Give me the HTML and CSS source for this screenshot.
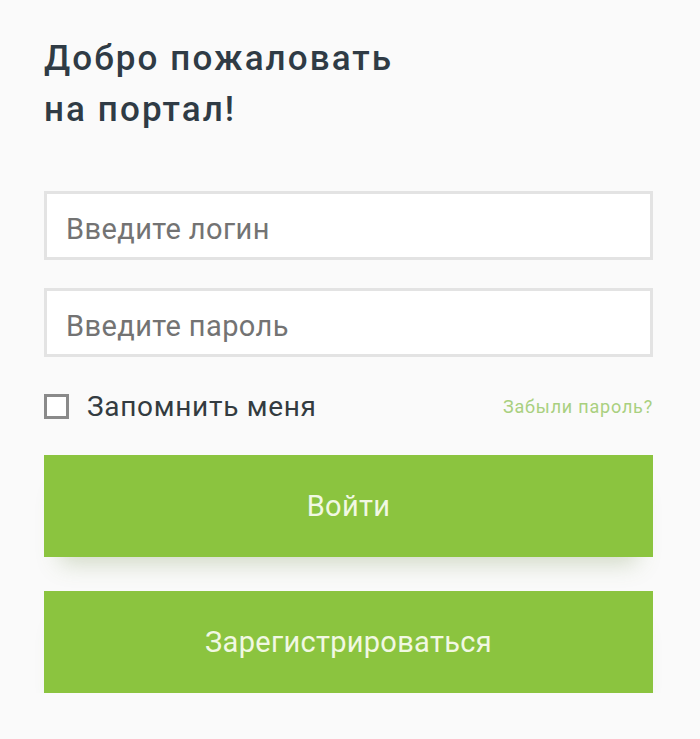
FILE: index.html
```html
<!DOCTYPE html>
<html lang="ru">
<head>
<meta charset="utf-8">
<link rel="stylesheet" href="styles.css">
</head>
<body>
<main class="login">
  <h1 class="title">Добро пожаловать<br>на портал!</h1>
  <form class="form">
    <div class="field"><input class="input" type="text" placeholder="Введите логин"></div>
    <div class="field"><input class="input" type="password" placeholder="Введите пароль"></div>
    <div class="row">
      <label class="remember"><span class="box"></span><span class="remember-text">Запомнить меня</span></label>
      <a class="forgot" href="#">Забыли пароль?</a>
    </div>
    <button type="button" class="btn btn-login">Войти</button>
    <button type="button" class="btn btn-register">Зарегистрироваться</button>
  </form>
</main>
</body>
</html>
```

FILE: styles.css
```css
html, body {
  margin: 0;
  padding: 0;
  background: #fafafa;
}
body {
  font-family: Roboto, "Noto Sans", sans-serif;
}
.login {
  width: 609px;
  padding: 33px 0 0 44px;
}
.title {
  margin: 0;
  font-size: 35px;
  line-height: 51px;
  font-weight: 500;
  letter-spacing: 2.1px;
  color: #2f3b45;
}
.form {
  margin-top: 56px;
  display: flex;
  flex-direction: column;
}
.field {
  margin-bottom: 28px;
}
.input {
  box-sizing: border-box;
  display: block;
  width: 609px;
  height: 69px;
  border: 3px solid #e3e3e3;
  background: #fff;
  padding: 6px 19px 0;
  font-family: Roboto, sans-serif;
  font-size: 29px;
  letter-spacing: 0.4px;
  color: #333;
  outline: none;
}
.input::placeholder {
  color: #737373;
}
.row {
  margin-top: -4px;
  height: 50px;
  display: flex;
  align-items: center;
  justify-content: space-between;
}
.remember {
  display: flex;
  align-items: center;
}
.box {
  box-sizing: border-box;
  width: 25px;
  height: 25px;
  border: 3px solid #8a8a8a;
  background: #fff;
}
.remember-text {
  margin-left: 18px;
  font-size: 28px;
  letter-spacing: 0.7px;
  color: #333b40;
}
.forgot {
  font-size: 18px;
  letter-spacing: 0.8px;
  color: #a9d07f;
  text-decoration: none;
}
.btn {
  margin-top: 24px;
  height: 102px;
  border: none;
  background: #8bc43f;
  color: #f1f8e3;
  font-family: Roboto, sans-serif;
  font-size: 29px;
  letter-spacing: 0.3px;
  box-shadow: 0 22px 22px -16px rgba(110, 140, 70, 0.3);
}
.btn-register {
  margin-top: 34px;
}
```
